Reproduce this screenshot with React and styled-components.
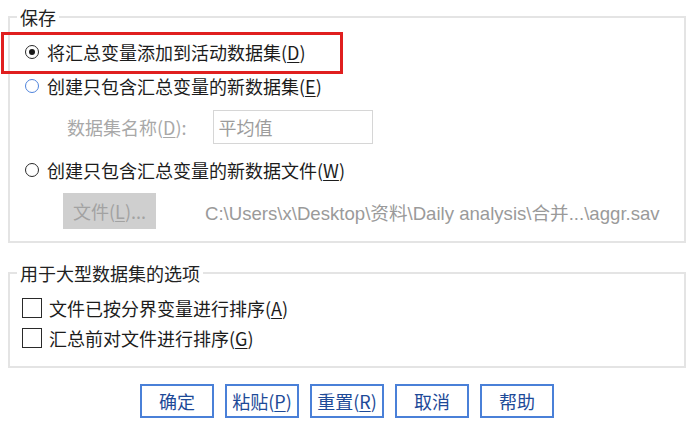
import styled, { createGlobalStyle } from 'styled-components';

const GlobalStyle = createGlobalStyle`
  html, body {
    margin: 0;
    padding: 0;
    background: #ffffff;
  }

  body {
    font-family: "Noto Sans CJK SC", "Liberation Sans", sans-serif;
    color: #1c1c1c;
  }
`;

const Page = styled.div`
  position: relative;
  width: 700px;
  height: 430px;
  box-sizing: border-box;
  padding: 6px 0 0 8px;
  overflow: hidden;
`;

const Group = styled.fieldset`
  width: 678px;
  box-sizing: border-box;
  margin: ${({ $top }) => $top || 0}px 0 0 0;
  padding: ${({ $pad }) => $pad};
  border: 2px solid #e4e4e4;

  legend {
    margin-left: 7px;
    padding: 0 3px;
    font-size: 18px;
    line-height: 22px;
    color: #222;
  }
`;

const Row = styled.div`
  display: flex;
  align-items: center;
  height: ${({ $h }) => $h}px;
  padding-left: ${({ $indent }) => $indent || 0}px;
  font-size: 18px;
  white-space: nowrap;
  color: ${({ $muted }) => ($muted ? '#a8a8a8' : '#1c1c1c')};
`;

const Radio = styled.span`
  width: 14px;
  height: 14px;
  box-sizing: border-box;
  border-radius: 50%;
  border: 1.8px solid ${({ $focus }) => ($focus ? '#4f84dc' : '#2a2a2a')};
  margin-right: 8px;
  display: flex;
  align-items: center;
  justify-content: center;
  flex-shrink: 0;

  &::after {
    content: '';
    display: ${({ $checked }) => ($checked ? 'block' : 'none')};
    width: 6px;
    height: 6px;
    border-radius: 50%;
    background: #1a1a1a;
  }
`;

const Checkbox = styled.span`
  width: 20px;
  height: 20px;
  box-sizing: border-box;
  border: 1.8px solid #2a2a2a;
  margin-right: 7px;
  flex-shrink: 0;
`;

const Key = styled.u`
  text-underline-offset: 2px;
`;

const NameInput = styled.div`
  width: 160px;
  height: 34px;
  box-sizing: border-box;
  margin-left: 26px;
  border: 1.5px solid #d6d6d6;
  padding-left: 5px;
  display: flex;
  align-items: center;
  color: #9c9c9c;
`;

const FileButton = styled.div`
  width: 93px;
  height: 36px;
  box-sizing: border-box;
  background: #cfcfcf;
  color: #a2a2a2;
  display: flex;
  align-items: center;
  justify-content: center;
`;

const PathText = styled.span`
  margin-left: 49px;
  font-family: "Liberation Sans", "Noto Sans CJK SC", sans-serif;
  font-size: 18.6px;
  color: #9a9a9a;
`;

const ButtonBar = styled.div`
  width: 678px;
  display: flex;
  justify-content: center;
  column-gap: 11px;
  margin-top: 16px;
`;

const Button = styled.div`
  min-width: 74px;
  height: 34px;
  box-sizing: border-box;
  padding: 0 4px;
  border: 2px solid #4a80d8;
  color: #1d4a98;
  font-size: 18px;
  display: flex;
  align-items: center;
  justify-content: center;
  white-space: nowrap;
`;

const Highlight = styled.div`
  position: absolute;
  left: 1px;
  top: 32px;
  width: 342px;
  height: 42px;
  box-sizing: border-box;
  border: 3px solid #e01f1f;
  pointer-events: none;
`;

const App = () => {
  return (
    <Page>
      <GlobalStyle />

      <Group $pad="7px 0 8px 0">
        <legend>保存</legend>
        <Row $h={34} $indent={15}>
          <Radio $checked />
          将汇总变量添加到活动数据集(<Key>D</Key>)
        </Row>
        <Row $h={34} $indent={15}>
          <Radio $focus />
          创建只包含汇总变量的新数据集(<Key>E</Key>)
        </Row>
        <Row $h={48} $indent={57} $muted>
          数据集名称(<Key>D</Key>):
          <NameInput>平均值</NameInput>
        </Row>
        <Row $h={38} $indent={15}>
          <Radio />
          创建只包含汇总变量的新数据文件(<Key>W</Key>)
        </Row>
        <Row $h={44} $indent={53} $muted>
          <FileButton>
            文件(<Key>L</Key>)...
          </FileButton>
          <PathText>C:\Users\x\Desktop\资料\Daily analysis\合并...\aggr.sav</PathText>
        </Row>
      </Group>

      <Group $top={19} $pad="9px 0 13px 0">
        <legend>用于大型数据集的选项</legend>
        <Row $h={30} $indent={12}>
          <Checkbox />
          文件已按分界变量进行排序(<Key>A</Key>)
        </Row>
        <Row $h={30} $indent={12}>
          <Checkbox />
          汇总前对文件进行排序(<Key>G</Key>)
        </Row>
      </Group>

      <ButtonBar>
        <Button>确定</Button>
        <Button>
          粘贴(<Key>P</Key>)
        </Button>
        <Button>
          重置(<Key>R</Key>)
        </Button>
        <Button>取消</Button>
        <Button>帮助</Button>
      </ButtonBar>

      <Highlight />
    </Page>
  );
};

export default App;
